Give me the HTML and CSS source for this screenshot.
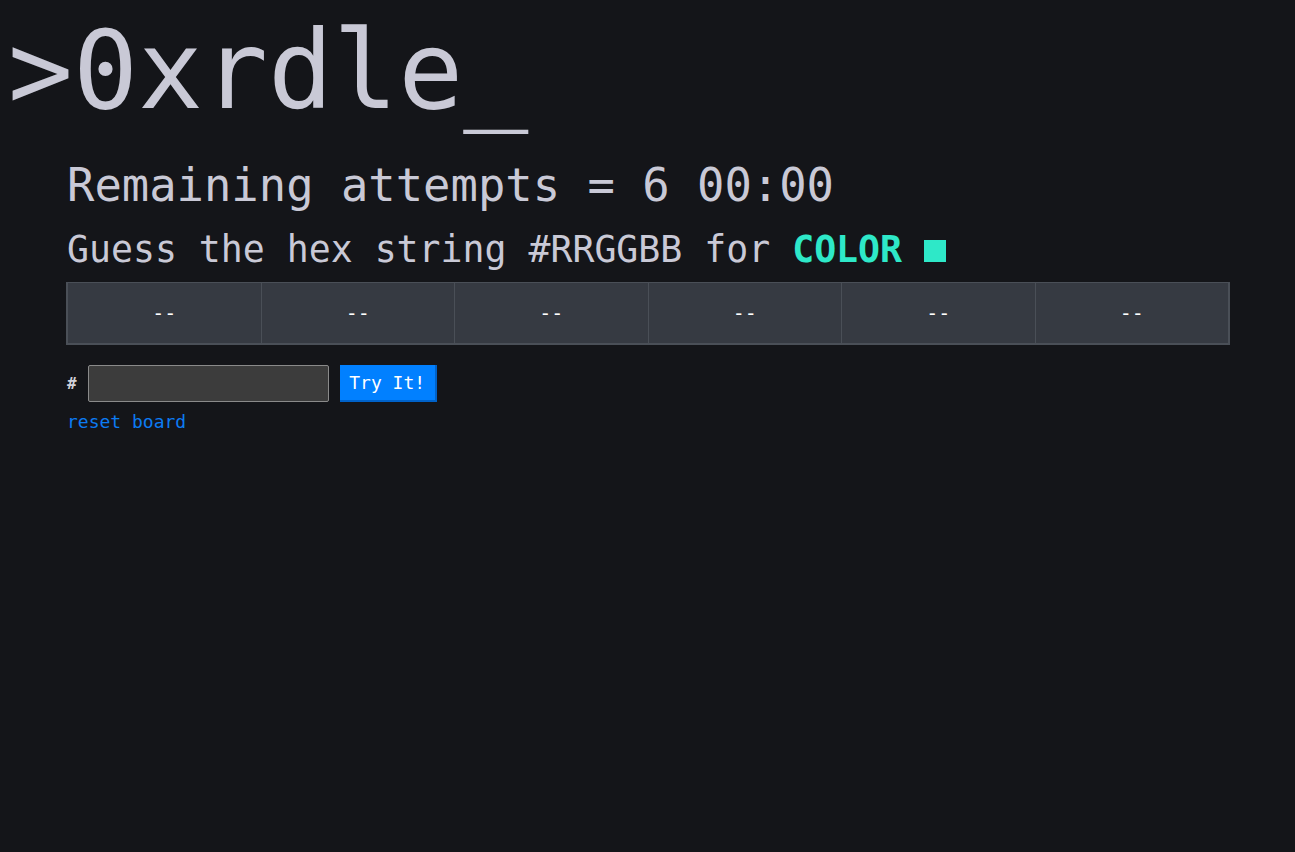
FILE: index.html
```html
<!DOCTYPE html>
<html lang="en">
<head>
<meta charset="utf-8">
<title>0xrdle</title>
<link rel="stylesheet" href="styles.css">
</head>
<body>
<h1 class="logo">&gt;0xrdle_</h1>
<main class="game">
  <h2 class="attempts">Remaining attempts = 6 00:00</h2>
  <h3 class="prompt">Guess the hex string #RRGGBB for <span class="color-name">COLOR</span> <span class="swatch"></span></h3>
  <div class="board">
    <div class="cell">--</div>
    <div class="cell">--</div>
    <div class="cell">--</div>
    <div class="cell">--</div>
    <div class="cell">--</div>
    <div class="cell">--</div>
  </div>
  <form class="guess-form" onsubmit="return false">
    <label class="hash" for="guess">#</label>
    <input class="guess-input" id="guess" type="text">
    <button class="try-btn" type="submit">Try It!</button>
  </form>
  <a class="reset" href="#">reset board</a>
</main>
</body>
</html>
```

FILE: styles.css
```css
html, body {
  margin: 0;
  padding: 0;
  background: #141519;
}

body {
  padding: 0 8px;
  font-family: "DejaVu Sans Mono", "Liberation Mono", monospace;
  color: #c9c9d6;
}

.logo {
  margin: 17px 0 0 0;
  font-size: 108px;
  line-height: 108px;
  font-weight: normal;
  letter-spacing: 0;
  color: #c9c9d6;
}

.game {
  display: flex;
  flex-direction: column;
  align-items: flex-start;
  padding-left: 59px;
  padding-right: 58px;
}

.attempts {
  margin: 34px 0 0 0;
  font-size: 45.5px;
  line-height: 54px;
  font-weight: normal;
}

.prompt {
  margin: 15px 0 0 0;
  font-size: 36.5px;
  line-height: 44px;
  font-weight: normal;
  display: flex;
  align-items: center;
  white-space: pre;
}

.color-name {
  color: #2ee8c8;
  font-weight: bold;
}

.swatch {
  display: inline-block;
  width: 22px;
  height: 22px;
  background: #2ee8c8;
  margin-left: 22px;
  margin-top: 2px;
}

.board {
  align-self: stretch;
  margin: 10px -1px 0 -1px;
  display: grid;
  grid-template-columns: repeat(6, 1fr);
  gap: 1px;
  background: #4a4f57;
  border: 2px solid #4a4f57;
  border-top-width: 1px;
  height: 60px;
}

.cell {
  background: #363a42;
  color: #ffffff;
  font-size: 20px;
  display: flex;
  align-items: center;
  justify-content: center;
}

.guess-form {
  margin: 20px 0 0 0;
  display: flex;
  align-items: center;
}

.hash {
  font-size: 16px;
  font-weight: bold;
  color: #d0d0d8;
  margin-right: 11px;
  margin-left: 0;
}

.guess-input {
  box-sizing: border-box;
  width: 241px;
  height: 37px;
  background: #3c3c3c;
  border: 1px solid #8a8a8a;
  border-radius: 2px;
  color: #ffffff;
  font-family: inherit;
  font-size: 16px;
  padding: 0 6px;
}

.try-btn {
  box-sizing: border-box;
  margin-left: 11px;
  height: 37px;
  width: 97px;
  background: #0180ff;
  color: #ffffff;
  border: none;
  border-right: 2px solid #0062c9;
  border-bottom: 2px solid #0062c9;
  font-family: inherit;
  font-size: 18px;
  padding: 0;
}

.reset {
  margin-top: 9px;
  font-size: 18px;
  line-height: 22px;
  color: #0c7bf2;
  text-decoration: none;
}
```
